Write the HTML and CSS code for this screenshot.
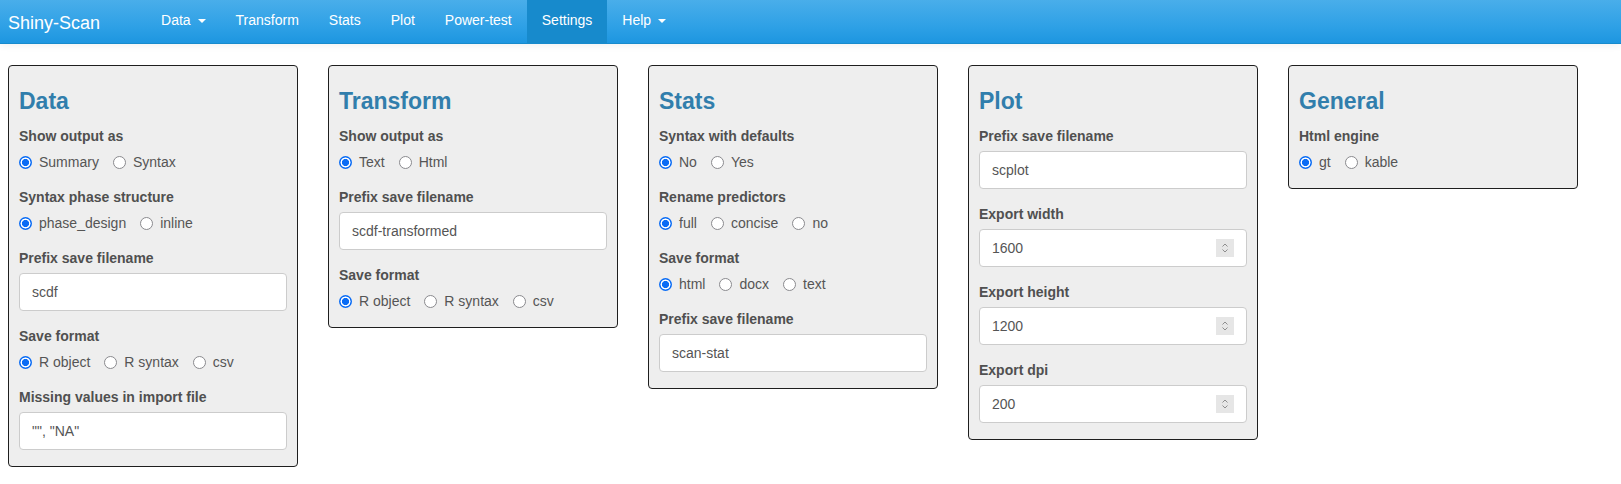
FILE: index.html
```html
<!DOCTYPE html>
<html lang="en">
<head>
<meta charset="utf-8">
<title>Shiny-Scan</title>
<link rel="stylesheet" href="styles.css">
</head>
<body>
<nav class="navbar">
  <span class="brand">Shiny-Scan</span>
  <ul class="nav">
    <li class="nav-item">Data <span class="caret"></span></li>
    <li class="nav-item">Transform</li>
    <li class="nav-item">Stats</li>
    <li class="nav-item">Plot</li>
    <li class="nav-item">Power-test</li>
    <li class="nav-item active">Settings</li>
    <li class="nav-item">Help <span class="caret"></span></li>
  </ul>
</nav>

<main class="panels">
  <section class="panel">
    <h3>Data</h3>
    <div class="form-group">
      <label class="control-label">Show output as</label>
      <div class="options">
        <label class="radio"><input type="radio" name="d1" checked><span>Summary</span></label>
        <label class="radio"><input type="radio" name="d1"><span>Syntax</span></label>
      </div>
    </div>
    <div class="form-group">
      <label class="control-label">Syntax phase structure</label>
      <div class="options">
        <label class="radio"><input type="radio" name="d2" checked><span>phase_design</span></label>
        <label class="radio"><input type="radio" name="d2"><span>inline</span></label>
      </div>
    </div>
    <div class="form-group">
      <label class="control-label">Prefix save filename</label>
      <input class="form-control" type="text" value="scdf">
    </div>
    <div class="form-group">
      <label class="control-label">Save format</label>
      <div class="options">
        <label class="radio"><input type="radio" name="d3" checked><span>R object</span></label>
        <label class="radio"><input type="radio" name="d3"><span>R syntax</span></label>
        <label class="radio"><input type="radio" name="d3"><span>csv</span></label>
      </div>
    </div>
    <div class="form-group">
      <label class="control-label">Missing values in import file</label>
      <input class="form-control" type="text" value="&quot;&quot;, &quot;NA&quot;">
    </div>
  </section>

  <section class="panel">
    <h3>Transform</h3>
    <div class="form-group">
      <label class="control-label">Show output as</label>
      <div class="options">
        <label class="radio"><input type="radio" name="t1" checked><span>Text</span></label>
        <label class="radio"><input type="radio" name="t1"><span>Html</span></label>
      </div>
    </div>
    <div class="form-group">
      <label class="control-label">Prefix save filename</label>
      <input class="form-control" type="text" value="scdf-transformed">
    </div>
    <div class="form-group">
      <label class="control-label">Save format</label>
      <div class="options">
        <label class="radio"><input type="radio" name="t2" checked><span>R object</span></label>
        <label class="radio"><input type="radio" name="t2"><span>R syntax</span></label>
        <label class="radio"><input type="radio" name="t2"><span>csv</span></label>
      </div>
    </div>
  </section>

  <section class="panel">
    <h3>Stats</h3>
    <div class="form-group">
      <label class="control-label">Syntax with defaults</label>
      <div class="options">
        <label class="radio"><input type="radio" name="s1" checked><span>No</span></label>
        <label class="radio"><input type="radio" name="s1"><span>Yes</span></label>
      </div>
    </div>
    <div class="form-group">
      <label class="control-label">Rename predictors</label>
      <div class="options">
        <label class="radio"><input type="radio" name="s2" checked><span>full</span></label>
        <label class="radio"><input type="radio" name="s2"><span>concise</span></label>
        <label class="radio"><input type="radio" name="s2"><span>no</span></label>
      </div>
    </div>
    <div class="form-group">
      <label class="control-label">Save format</label>
      <div class="options">
        <label class="radio"><input type="radio" name="s3" checked><span>html</span></label>
        <label class="radio"><input type="radio" name="s3"><span>docx</span></label>
        <label class="radio"><input type="radio" name="s3"><span>text</span></label>
      </div>
    </div>
    <div class="form-group">
      <label class="control-label">Prefix save filename</label>
      <input class="form-control" type="text" value="scan-stat">
    </div>
  </section>

  <section class="panel">
    <h3>Plot</h3>
    <div class="form-group">
      <label class="control-label">Prefix save filename</label>
      <input class="form-control" type="text" value="scplot">
    </div>
    <div class="form-group">
      <label class="control-label">Export width</label>
      <div class="form-control number">
        <input type="text" value="1600">
        <span class="spin"><svg width="18" height="18" viewBox="0 0 18 18"><path d="M6.5 7.5 L9 5 L11.5 7.5 M6.5 10.5 L9 13 L11.5 10.5" fill="none" stroke="#8d8d8d" stroke-width="1"/></svg></span>
      </div>
    </div>
    <div class="form-group">
      <label class="control-label">Export height</label>
      <div class="form-control number">
        <input type="text" value="1200">
        <span class="spin"><svg width="18" height="18" viewBox="0 0 18 18"><path d="M6.5 7.5 L9 5 L11.5 7.5 M6.5 10.5 L9 13 L11.5 10.5" fill="none" stroke="#8d8d8d" stroke-width="1"/></svg></span>
      </div>
    </div>
    <div class="form-group">
      <label class="control-label">Export dpi</label>
      <div class="form-control number">
        <input type="text" value="200">
        <span class="spin"><svg width="18" height="18" viewBox="0 0 18 18"><path d="M6.5 7.5 L9 5 L11.5 7.5 M6.5 10.5 L9 13 L11.5 10.5" fill="none" stroke="#8d8d8d" stroke-width="1"/></svg></span>
      </div>
    </div>
  </section>

  <section class="panel">
    <h3>General</h3>
    <div class="form-group">
      <label class="control-label">Html engine</label>
      <div class="options">
        <label class="radio"><input type="radio" name="g1" checked><span>gt</span></label>
        <label class="radio"><input type="radio" name="g1"><span>kable</span></label>
      </div>
    </div>
  </section>
</main>
</body>
</html>
```

FILE: styles.css
```css
* { box-sizing: border-box; }

body {
  margin: 0;
  font-family: "Liberation Sans", Arial, Helvetica, sans-serif;
  font-size: 14px;
  line-height: 20px;
  color: #555;
  background: #fff;
}

.navbar {
  display: flex;
  align-items: stretch;
  height: 44px;
  background-image: linear-gradient(#49aeea, #2fa1e6 60%, #1d96e0);
  border-bottom: 1px solid #178acc;
  box-shadow: 0 1px 8px rgba(0, 0, 0, 0.07);
}

.brand {
  color: #fff;
  font-size: 18px;
  line-height: 20px;
  padding: 13px 46px 0 8px;
}

.nav {
  display: flex;
  list-style: none;
  margin: 0;
  padding: 0;
}

.nav-item {
  color: #fff;
  padding: 10px 15px 13px;
  line-height: 20px;
  white-space: nowrap;
}

.nav-item.active {
  background-color: #178acc;
}

.caret {
  display: inline-block;
  width: 0;
  height: 0;
  margin-left: 3px;
  vertical-align: middle;
  border-top: 4px solid #fff;
  border-left: 4px solid transparent;
  border-right: 4px solid transparent;
}

.panels {
  display: flex;
  align-items: flex-start;
  gap: 30px;
  padding: 21px 0 0 8px;
}

.panel {
  width: 290px;
  flex: none;
  background: #eee;
  border: 1px solid #1e1e1e;
  border-radius: 4px;
  padding: 0 10px 1px;
}

.panel h3 {
  margin: 23px 0 12px;
  font-size: 23px;
  line-height: 25px;
  font-weight: bold;
  color: #317eac;
}

.form-group {
  margin-bottom: 15px;
}

.control-label {
  display: block;
  font-weight: bold;
  margin-bottom: 5px;
  color: #505050;
}

.options {
  display: flex;
  gap: 14px;
  padding-top: 1px;
}

.radio {
  display: flex;
  align-items: flex-start;
  line-height: 20px;
  white-space: nowrap;
}

.radio input {
  -webkit-appearance: none;
  appearance: none;
  width: 13px;
  height: 13px;
  margin: 4px 7px 0 0;
  border: 1px solid #8a8a8e;
  border-radius: 50%;
  background: #fff;
  flex: none;
}

.radio input:checked {
  border: none;
  background: radial-gradient(circle closest-side, #0a6cf5 0 52%, #fff 58% 74%, #0a6cf5 80%);
}

.form-control {
  display: block;
  width: 100%;
  height: 38px;
  padding: 6px 12px;
  font-family: inherit;
  font-size: 14px;
  line-height: 20px;
  color: #555;
  background: #fff;
  border: 1px solid #ccc;
  border-radius: 4px;
  outline: none;
}

.form-control.number {
  display: flex;
  align-items: center;
}

.form-control.number input {
  flex: 1;
  min-width: 0;
  border: none;
  padding: 0;
  margin: 0;
  font-family: inherit;
  font-size: 14px;
  color: #555;
  background: transparent;
  outline: none;
}

.spin {
  display: flex;
  width: 18px;
  height: 18px;
  background: #e6e6e6;
  flex: none;
}
```
